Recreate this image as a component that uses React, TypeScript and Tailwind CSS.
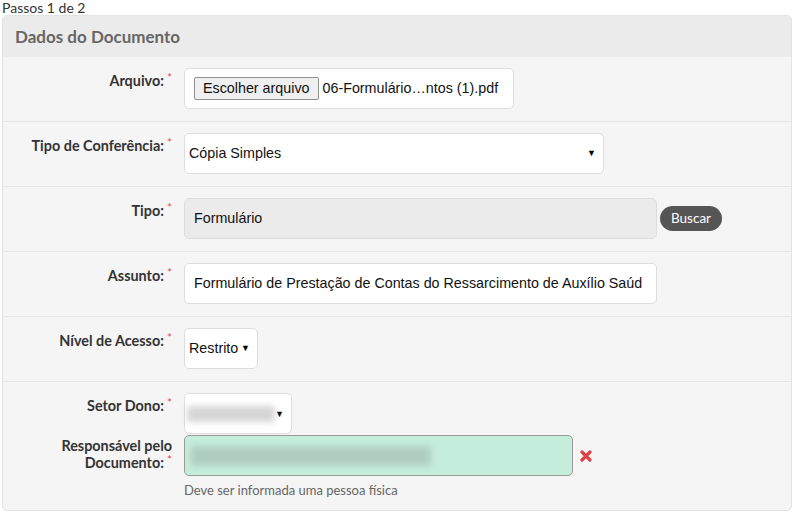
import React from 'react';

const lato = { fontFamily: 'Lato, "Open Sans", sans-serif' };
const arial = { fontFamily: '"Liberation Sans", Arial, sans-serif' };

const Star = () => (
  <span className="relative -top-[4px] ml-[3px] text-[12px] font-normal text-[#e8505b]">*</span>
);

const Label: React.FC<{ children: React.ReactNode }> = ({ children }) => (
  <div className="w-[169px] shrink-0 pr-[2px] pt-[4px] text-right text-[14.4px] leading-[17px] font-bold text-[#333]" style={lato}>
    {children}
    <Star />
  </div>
);

const Row: React.FC<{ children: React.ReactNode; last?: boolean }> = ({ children, last }) => (
  <div className={`flex gap-[10px] pl-[2px] pt-[11px] pb-[12px] ${last ? '' : 'border-b border-[#e6e6e6]'}`}>
    {children}
  </div>
);

const Arrow = () => <span className="ml-auto text-[9px] leading-none text-black">▼</span>;

export default function App() {
  return (
    <div className="min-h-[515px] bg-white pl-[2px] pr-[4px]" style={lato}>
      <div className="text-[14px] leading-[15px] text-[#333]">Passos 1 de 2</div>

      {/* Panel */}
      <div className="overflow-hidden rounded-[5px] border border-[#e3e3e3] bg-[#f5f5f5]">
        <div className="flex h-[41px] items-center bg-[#ebebeb] px-[12px]">
          <h2 className="text-[17px] font-bold text-[#666]">Dados do Documento</h2>
        </div>

        {/* Arquivo */}
        <Row>
          <Label>Arquivo:</Label>
          <div className="flex h-[41px] w-[330px] items-center rounded-[5px] border border-[#ddd] bg-white px-[9px] text-[14.3px] text-[#111]" style={arial}>
            <span className="rounded-[2px] border border-[#8f8f8f] bg-[#efefef] px-[8px] py-[2px] leading-[17px]">Escolher arquivo</span>
            <span className="ml-[4px]">06-Formulário…ntos (1).pdf</span>
          </div>
        </Row>

        {/* Tipo de Conferência */}
        <Row>
          <Label>Tipo de Conferência:</Label>
          <div className="flex h-[41px] w-[420px] items-center rounded-[5px] border border-[#ddd] bg-white pl-[4px] pr-[7px] text-[14.3px] text-[#111]" style={arial}>
            Cópia Simples
            <Arrow />
          </div>
        </Row>

        {/* Tipo */}
        <Row>
          <Label>Tipo:</Label>
          <div className="flex items-center gap-[3px]">
            <div className="flex h-[41px] w-[473px] items-center rounded-[5px] border border-[#ddd] bg-[#ebebeb] px-[9px] text-[14.3px] text-[#111]" style={arial}>
              Formulário
            </div>
            <button className="h-[25px] rounded-full bg-[#555] px-[11px] text-[13.5px] text-white" style={lato}>Buscar</button>
          </div>
        </Row>

        {/* Assunto */}
        <Row>
          <Label>Assunto:</Label>
          <div className="h-[41px] w-[473px] rounded-[5px] border border-[#ddd] bg-white pl-[9px] pr-[10px] text-[14.3px] text-[#111]" style={arial}>
            <div className="h-full w-[448px] overflow-hidden whitespace-nowrap leading-[39px]">
              Formulário de Prestação de Contas do Ressarcimento de Auxílio Saúde
            </div>
          </div>
        </Row>

        {/* Nível de Acesso */}
        <Row>
          <Label>Nível de Acesso:</Label>
          <div className="flex h-[41px] w-[74px] items-center rounded-[5px] border border-[#ddd] bg-white pl-[4px] pr-[7px] text-[14.3px] text-[#111]" style={arial}>
            Restrito
            <Arrow />
          </div>
        </Row>

        {/* Setor / Responsável */}
        <Row last>
          <div className="flex flex-col">
            <div className="h-[42px]">
              <Label>Setor Dono:</Label>
            </div>
            <div className="w-[169px] pr-[2px] pt-[2px] text-right text-[14.4px] leading-[17px] font-bold text-[#333]" style={lato}>
              Responsável pelo
              <br />
              Documento:
              <Star />
            </div>
          </div>
          <div className="flex flex-col">
            <div className="flex h-[41px] w-[108px] items-center rounded-[5px] border border-[#ddd] bg-white pl-[2px] pr-[7px]">
              <div className="h-[16px] w-[89px] rounded-[2px] bg-[#d6d6d6] blur-[3px]" />
              <Arrow />
            </div>
            <div className="mt-[1px] flex items-center gap-[7px]">
              <div className="flex h-[41px] w-[389px] items-center rounded-[5px] border border-[#9a9a9a] bg-[#c5eddc] px-[6px]">
                <div className="h-[20px] w-[240px] rounded-[2px] bg-[#afcdbf] blur-[3px]" />
              </div>
              <svg width="12" height="12" viewBox="0 0 12 12">
                <path d="M2 2 L10 10 M10 2 L2 10" stroke="#e04146" strokeWidth="3.2" strokeLinecap="round" />
              </svg>
            </div>
            <div className="mt-[6px] text-[13px] leading-[16px] text-[#666]">Deve ser informada uma pessoa física</div>
          </div>
        </Row>
      </div>
    </div>
  );
}
